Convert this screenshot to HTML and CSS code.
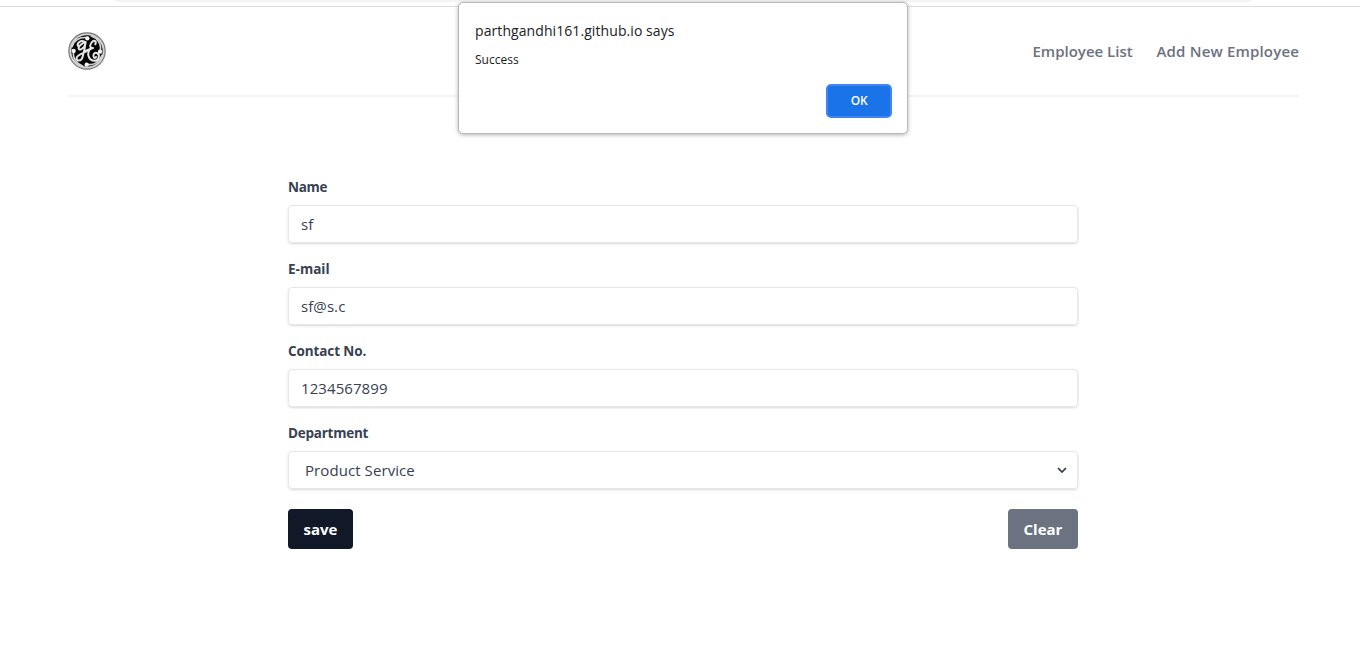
FILE: index.html
```
<!DOCTYPE html>
<html lang="en">
<head>
<meta charset="utf-8">
<title>Add New Employee</title>
<link rel="stylesheet" href="styles.css">
</head>
<body>
<div class="toolbar"><div class="address"></div></div>
<header class="header">
  <svg class="logo" viewBox="0 0 114 114" fill="none" stroke-linecap="round" stroke-linejoin="round">
    <circle cx="57" cy="57" r="54.5" fill="#d2d2d2" stroke="#777" stroke-width="3.5"/>
    <circle cx="57" cy="57" r="47" fill="#050505"/>
    <g stroke="#d5d5d5" stroke-width="5">
      <path d="M56 17C34 14 17 27 12 44"/>
      <path d="M97 56C101 35 88 18 70 12"/>
      <path d="M58 97C79 101 96 88 102 70"/>
      <path d="M17 58C13 79 26 96 44 102"/>
    </g>
    <g fill="#f5f5f5">
      <circle cx="58" cy="19" r="6.5"/><circle cx="96" cy="59" r="6.5"/>
      <circle cx="56" cy="98" r="6.5"/><circle cx="17" cy="57" r="6.5"/>
    </g>
    <g stroke="#e6e6e6" stroke-width="6">
      <path d="M31 43C24 34 38 24 48 28C57 33 49 47 39 52C30 55 29 45 38 38C43 34 50 29 53 30C51 45 48 60 44 74C40 89 24 89 26 77C29 67 46 65 58 56"/>
      <path d="M82 37C86 28 79 23 73 29C65 37 64 47 73 48C63 50 58 62 62 73C67 89 88 91 92 77C96 64 82 58 77 67C73 76 81 81 84 75"/>
      <path d="M52 57C61 54 66 50 75 48"/>
    </g>
  </svg>
  <nav class="nav"><a class="link link-list">Employee List</a><a class="link link-add">Add New Employee</a></nav>
</header>
<form class="form">
  <div class="field"><label class="label label-name">Name</label><div class="input">sf</div></div>
  <div class="field"><label class="label">E-mail</label><div class="input">sf@s.c</div></div>
  <div class="field"><label class="label label-contact">Contact No.</label><div class="input">1234567899</div></div>
  <div class="field"><label class="label label-dept">Department</label>
    <div class="input select"><span>Product Service</span>
      <svg class="chevron" viewBox="0 0 10 6"><path d="M1 1L5 5L9 1" fill="none" stroke="#303846" stroke-width="1.7"/></svg>
    </div>
  </div>
  <div class="actions"><button type="button" class="button save">save</button><button type="button" class="button clear">Clear</button></div>
</form>
<div class="dialog">
  <div class="origin">parthgandhi161.github.io says</div>
  <div class="message">Success</div>
  <button type="button" class="ok">OK</button>
</div>
</body>
</html>
```
FILE: styles.css
```
* { box-sizing: border-box; }
body { margin: 0; background: #fff; height: 653px; overflow: hidden; font: 16px/24px "Open Sans", "Noto Sans", sans-serif; color: #374151; }
.toolbar { height: 7px; border-bottom: 1px solid #dadce0; }
.address { height: 2px; margin: 0 109px 0 115px; background: #f1f3f4; border-radius: 0 0 10px 10px; }
.header { display: flex; align-items: center; justify-content: space-between; height: 90px; margin: 0 61px 0 67px; padding-left: 1px; border-bottom: 2px solid #f3f4f6; }
.logo { width: 38px; height: 38px; }
.nav { display: flex; gap: 24px; }
.link { font-size: 15px; font-weight: 600; color: #6b7280; white-space: nowrap; }
.link-list { width: 100px; }
.link-add { width: 142.5px; letter-spacing: 0.18px; }
.form { width: 790px; margin: 80px 0 0 288px; }
.field { height: 82px; }
.label { display: block; height: 20px; margin-bottom: 8px; font-size: 13.5px; line-height: 20px; font-weight: 700; }
.label-name { letter-spacing: -0.3px; }
.label-contact { letter-spacing: -0.1px; }
.label-dept { letter-spacing: -0.25px; }
.input { display: flex; align-items: center; height: 38px; padding: 0 12px; font-size: 15px; letter-spacing: 0.08px; border: 1px solid #e5e7eb; border-radius: 4px; box-shadow: 0 1px 3px rgba(0,0,0,.1), 0 1px 2px rgba(0,0,0,.06); }
.select { justify-content: space-between; padding: 0 10px 0 16px; }
.chevron { width: 10px; height: 6px; }
.actions { display: flex; justify-content: space-between; margin-top: 4px; }
.button { height: 40px; padding: 0; border: 0; border-radius: 4px; color: #fff; font: 700 15px/24px "Open Sans", "Noto Sans", sans-serif; }
.save { width: 65px; background: #111827; }
.clear { width: 70px; background: #6b7280; }
.dialog { position: absolute; left: 458px; top: 2px; width: 450px; height: 132px; display: flex; flex-direction: column; padding: 18px 16px 15px; background: #fff; border: 1px solid #b9b9b9; border-radius: 5px; box-shadow: 0 1px 4px rgba(0,0,0,.3); color: #202124; }
.origin { font-size: 14px; line-height: 20px; letter-spacing: 0.08px; }
.message { margin-top: 10px; font-size: 12px; line-height: 18px; }
.ok { flex: none; align-self: flex-end; width: 66px; height: 34px; margin-top: 15px; margin-right: -1px; padding: 0; border: 2px solid #4285f4; border-radius: 5px; background: #1a73e8; color: #fff; font: 600 12px/18px "Open Sans", "Noto Sans", sans-serif; letter-spacing: -0.3px; }
```
